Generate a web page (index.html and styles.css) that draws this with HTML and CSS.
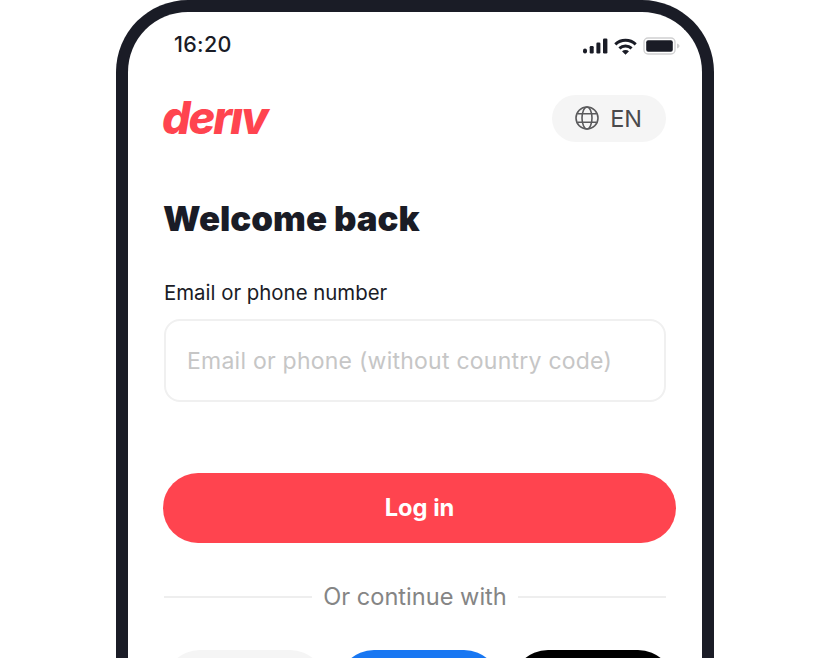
FILE: index.html
```html
<!DOCTYPE html>
<html lang="en">
<head>
  <meta charset="UTF-8">
  <meta name="viewport" content="width=device-width, initial-scale=1.0">
  <title>Deriv - Log in</title>
  <link rel="stylesheet" href="styles.css">
</head>
<body>

  <div class="phone">
    <div class="status-bar">
      <span class="time">16:20</span>
      <div class="status-icons">
        <svg width="25" height="16" viewBox="0 0 25 16" fill="#1a1c26">
          <rect x="0" y="10.5" width="4" height="5" rx="2"/>
          <rect x="6.7" y="8" width="4" height="7.5" rx="1.2"/>
          <rect x="13.4" y="4.5" width="4" height="11" rx="1.2"/>
          <rect x="20" y="0.5" width="4.4" height="15" rx="1.2"/>
        </svg>
        <svg width="23" height="17" viewBox="0 0 23 17" fill="none" stroke="#1a1c26" stroke-width="3">
          <path d="M1.300 6.400C7 1 16 1 21.700 6.400"/>
          <path d="M5.400 10.300C8.700 7.300 14.300 7.300 17.600 10.300"/>
          <path d="M11.500 16.800L8 13.200C10 11.600 13 11.600 15 13.200Z" fill="#1a1c26" stroke="none"/>
        </svg>
        <svg class="battery" width="37" height="18" viewBox="0 0 37 18">
          <rect x="1" y="1" width="31" height="16" rx="4" fill="#fff" stroke="#d0d0d1" stroke-width="1.400"/>
          <rect x="3.200" y="3.200" width="26.600" height="11.600" rx="2" fill="#1a1c26"/>
          <path d="M34 6.500C35.500 7 36.500 8 36.500 9C36.500 10 35.500 11 34 11.500Z" fill="#d0d0d1"/>
        </svg>
      </div>
    </div>

    <div class="content">
      <div class="top-row">
        <span class="logo" aria-label="deriv">derıv</span>
        <button class="lang-btn">
          <svg width="26" height="26" viewBox="0 0 26 26" fill="none" stroke="#5a5a5c" stroke-width="1.600">
            <circle cx="13" cy="13" r="11"/>
            <ellipse cx="13" cy="13" rx="5" ry="11"/>
            <path d="M3.200 8.800H22.800M3.200 17.200H22.800"/>
          </svg>
          <span>EN</span>
        </button>
      </div>

      <h1>Welcome back</h1>

      <label class="field-label" for="login">Email or phone number</label>
      <input class="field-input" type="text" id="login" placeholder="Email or phone (without country code)">

      <button class="login-btn">Log in</button>

      <div class="divider">
        <span class="divider-line"></span>
        <span class="divider-text">Or continue with</span>
        <span class="divider-line"></span>
      </div>

      <div class="social-row">
        <div class="social-btn google"></div>
        <div class="social-btn facebook"></div>
        <div class="social-btn apple"></div>
      </div>
    </div>
  </div>

</body>
</html>
```

FILE: styles.css
```css
html, body {
  height: 100%;
}

body {
  font-family: Inter, 'Liberation Sans', sans-serif;
  background-color: #fff;
  margin: 0;
  overflow: hidden;
  display: flex;
  justify-content: center;
  height: 658px;
}

.phone {
  box-sizing: border-box;
  flex: none;
  width: 598px;
  height: 658px;
  margin-right: 2px;
  overflow: hidden;
  background: #fff;
  border: 12px solid #1a1c26;
  border-bottom: none;
  border-radius: 72px 72px 0 0;
}

.status-bar {
  display: flex;
  justify-content: space-between;
  align-items: center;
  height: 64px;
  padding: 0 22px 0 46px;
}

.time {
  font-size: 21.500px;
  font-weight: 500;
  color: #1a1c26;
  letter-spacing: 0.3px;
}

.status-icons {
  display: flex;
  align-items: center;
  gap: 6px;
  padding-top: 4px;
}

.content {
  padding: 18px 36px 0;
}

.top-row {
  display: flex;
  justify-content: space-between;
  align-items: center;
  height: 48px;
}

.logo {
  margin: -2px 0 0 -2px;
  font-size: 45px;
  font-weight: 800;
  font-style: italic;
  color: #ff444f;
  letter-spacing: -2.100px;
}

.lang-btn {
  display: flex;
  align-items: center;
  gap: 10px;
  height: 47px;
  padding: 0 24px 0 22px;
  border: none;
  border-radius: 24px;
  background-color: #f5f5f5;
  color: #4a4a4c;
  font-family: inherit;
  font-size: 23.500px;
}

h1 {
  margin: 53px 0 0 -1px;
  font-size: 34.800px;
  line-height: 46px;
  font-weight: 900;
  color: #1a1c26;
}

.field-label {
  display: block;
  margin-top: 38px;
  font-size: 20.400px;
  line-height: 28px;
  color: #1a1c26;
}

.field-input {
  box-sizing: border-box;
  display: block;
  width: 100%;
  height: 83px;
  margin-top: 12px;
  padding: 0 21px;
  border: 2px solid #f0f0f0;
  border-radius: 16px;
  outline: none;
  font-family: inherit;
  font-size: 23px;
  letter-spacing: 0.24px;
}

.field-input::placeholder {
  color: #c6c6c6;
}

.login-btn {
  display: block;
  width: 513px;
  height: 70px;
  margin: 71px 0 0 -1px;
  padding: 0 0 2px;
  border: none;
  border-radius: 36px;
  background-color: #ff444f;
  color: #fff;
  font-family: inherit;
  font-size: 23.700px;
  font-weight: 700;
}

.divider {
  display: flex;
  align-items: center;
  gap: 11px;
  margin-top: 39px;
}

.divider-line {
  flex: 1;
  height: 2px;
  background-color: #eeeeee;
}

.divider-text {
  font-size: 23.600px;
  line-height: 30px;
  color: #858585;
}

.social-row {
  display: flex;
  gap: 12px;
  margin: 38px -8px 0 0;
}

.social-btn {
  flex: 1;
  height: 72px;
  border-radius: 36px;
}

.google {
  background-color: #f5f5f5;
}

.facebook {
  background-color: #1877f2;
}

.apple {
  background-color: #000;
}
```
